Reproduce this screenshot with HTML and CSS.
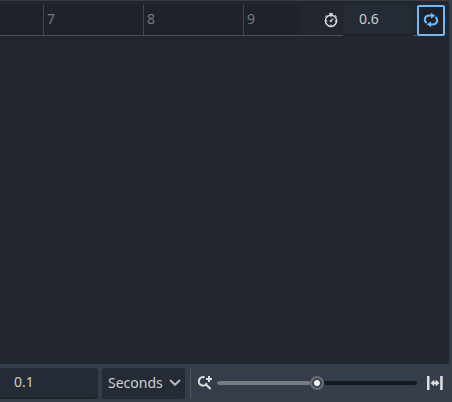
FILE: index.html
```html
<!DOCTYPE html>
<html lang="en">
<head>
<meta charset="utf-8">
<title>Animation timeline</title>
<link rel="stylesheet" href="styles.css">
</head>
<body>
<main class="editor">
  <section class="timeline">
    <header class="header">
      <div class="ruler">
        <span class="tick">7</span>
        <span class="tick">8</span>
        <span class="tick">9</span>
      </div>
      <div class="clock">
        <svg width="16" height="16" viewBox="0 0 16 16" fill="none" stroke="#e0e0e0">
          <circle cx="8" cy="8.8" r="5.6" stroke-width="1.5"/>
          <path d="M6.2 1.7h3.6M8 1.7v2" stroke-width="1.6"/>
          <path d="M12.2 3.2l1.4 1.4M3.8 3.2L2.4 4.6" stroke-width="1"/>
          <path d="M7.7 9.1l2.5-2.5" stroke-width="1.2"/>
          <circle cx="7.8" cy="9" r="1.1" fill="#e0e0e0" stroke="none"/>
          <path d="M8 4v1.3M8 12.5v1.3M3 9h1.3M11.7 9H13" stroke-width="1"/>
        </svg>
      </div>
      <div class="field length">0.6</div>
      <div class="gap"></div>
      <button class="loop" aria-label="Loop">
        <svg width="16" height="16" viewBox="0 0 16 16">
          <path d="M3.6 11C.2 8 2 3.6 6.4 3.6h2M12.4 5c3.4 3 1.6 7.4-2.8 7.4h-2" fill="none" stroke="#70bafa" stroke-width="2"/>
          <path d="M8 .8v5.8l4.3-2.9zM8 9.4v5.8l-4.3-2.9z" fill="#70bafa"/>
        </svg>
      </button>
    </header>
    <div class="tracks"></div>
  </section>
  <footer class="toolbar">
    <div class="field snap">0.1</div>
    <button class="select">Seconds
      <svg width="12" height="8" viewBox="0 0 12 8"><path d="M1.5 1.6L6 5.8l4.5-4.2" fill="none" stroke="#b9bbbe" stroke-width="2" stroke-linecap="round" stroke-linejoin="round"/></svg>
    </button>
    <div class="separator"></div>
    <svg class="zoom" width="16" height="16" viewBox="0 0 16 16" fill="none" stroke="#e0e0e0" stroke-width="2">
      <path d="M7.6 2.4A4.2 4.2 0 1 0 9.8 8.2M8.7 9.2l4.9 4.8"/>
      <path d="M12 1v6M9 4h6"/>
    </svg>
    <div class="slider"><span class="filled"></span><span class="grabber"></span></div>
    <svg class="fit" width="16" height="16" viewBox="0 0 16 16" fill="#e0e0e0">
      <path d="M0 1h2.5v14H0zM13.2 1h2.5v14h-2.5z"/>
      <path d="M3.7 8L7 5v2h2V5l3.3 3L9 11V9H7v2z" stroke="#e0e0e0" stroke-width=".4"/>
    </svg>
  </footer>
</main>
</body>
</html>
```
FILE: styles.css
```css
* { box-sizing: border-box; }
body {
  margin: 0;
  background: #363d4a;
  color: #cdcfd2;
  font: 14px/20px "Noto Sans", sans-serif;
}
.editor {
  display: flex;
  flex-direction: column;
  width: 452px;
  height: 402px;
  overflow: hidden;
}
.timeline {
  display: flex;
  flex-direction: column;
  height: 364px;
  margin-right: 3px;
  padding-top: 4px;
  border-top: 1px solid #363d4a;
  border-radius: 0 3px 3px 0;
  background: #22262e;
}
.header { display: flex; height: 31px; }
.ruler {
  display: flex;
  width: 300px;
  padding-left: 43px;
  background: #1e2229;
  border-bottom: 1px solid #4a4d53;
}
.tick {
  flex: 0 0 100px;
  padding: 4px 0 0 3px;
  border-left: 1px solid #43474c;
  color: #77797d;
}
.clock {
  width: 43px;
  padding: 7px 0 0 23px;
  border-bottom: 1px solid #4a4d53;
}
svg { display: block; flex: none; }
.field { background: #252b34; border-bottom: 2px solid #1d2229; }
.length {
  width: 70px;
  height: 31px;
  padding: 4px 0 0 16px;
  border-radius: 3px;
}
.gap { width: 4px; border-bottom: 1px solid #4a4d53; }
button { margin: 0; border: 0; font: inherit; color: inherit; }
.loop {
  width: 28px;
  height: 31px;
  padding: 5px 4px 6px;
  border: 2px solid #70bafa;
  border-radius: 2px;
  background: #1e222a;
}
.tracks { flex: 1; }
.toolbar {
  display: flex;
  align-items: center;
  height: 38px;
}
.snap {
  width: 98px;
  height: 31px;
  padding: 4px 0 0 14px;
  border-radius: 0 3px 3px 0;
}
.select {
  display: flex;
  align-items: center;
  justify-content: space-between;
  width: 83px;
  height: 31px;
  margin-left: 4px;
  padding: 0 4px 0 6px;
  border-radius: 3px;
  background: #252b34;
}
.separator {
  width: 1px;
  height: 31px;
  margin-left: 5px;
  background: #505661;
}
.zoom { margin-left: 6px; }
.slider {
  display: flex;
  align-items: center;
  width: 200px;
  height: 4px;
  margin-left: 4px;
  border-radius: 2px;
  background: #171a21;
}
.filled {
  width: 93px;
  height: 4px;
  border-radius: 2px 0 0 2px;
  background: #777b83;
}
.grabber {
  width: 14px;
  height: 14px;
  border: 2px solid #6b7079;
  border-radius: 50%;
  background: radial-gradient(circle, #f2f2f2 0 2.5px, #3d434f 3.6px);
}
.fit { margin-left: 10px; }
```
